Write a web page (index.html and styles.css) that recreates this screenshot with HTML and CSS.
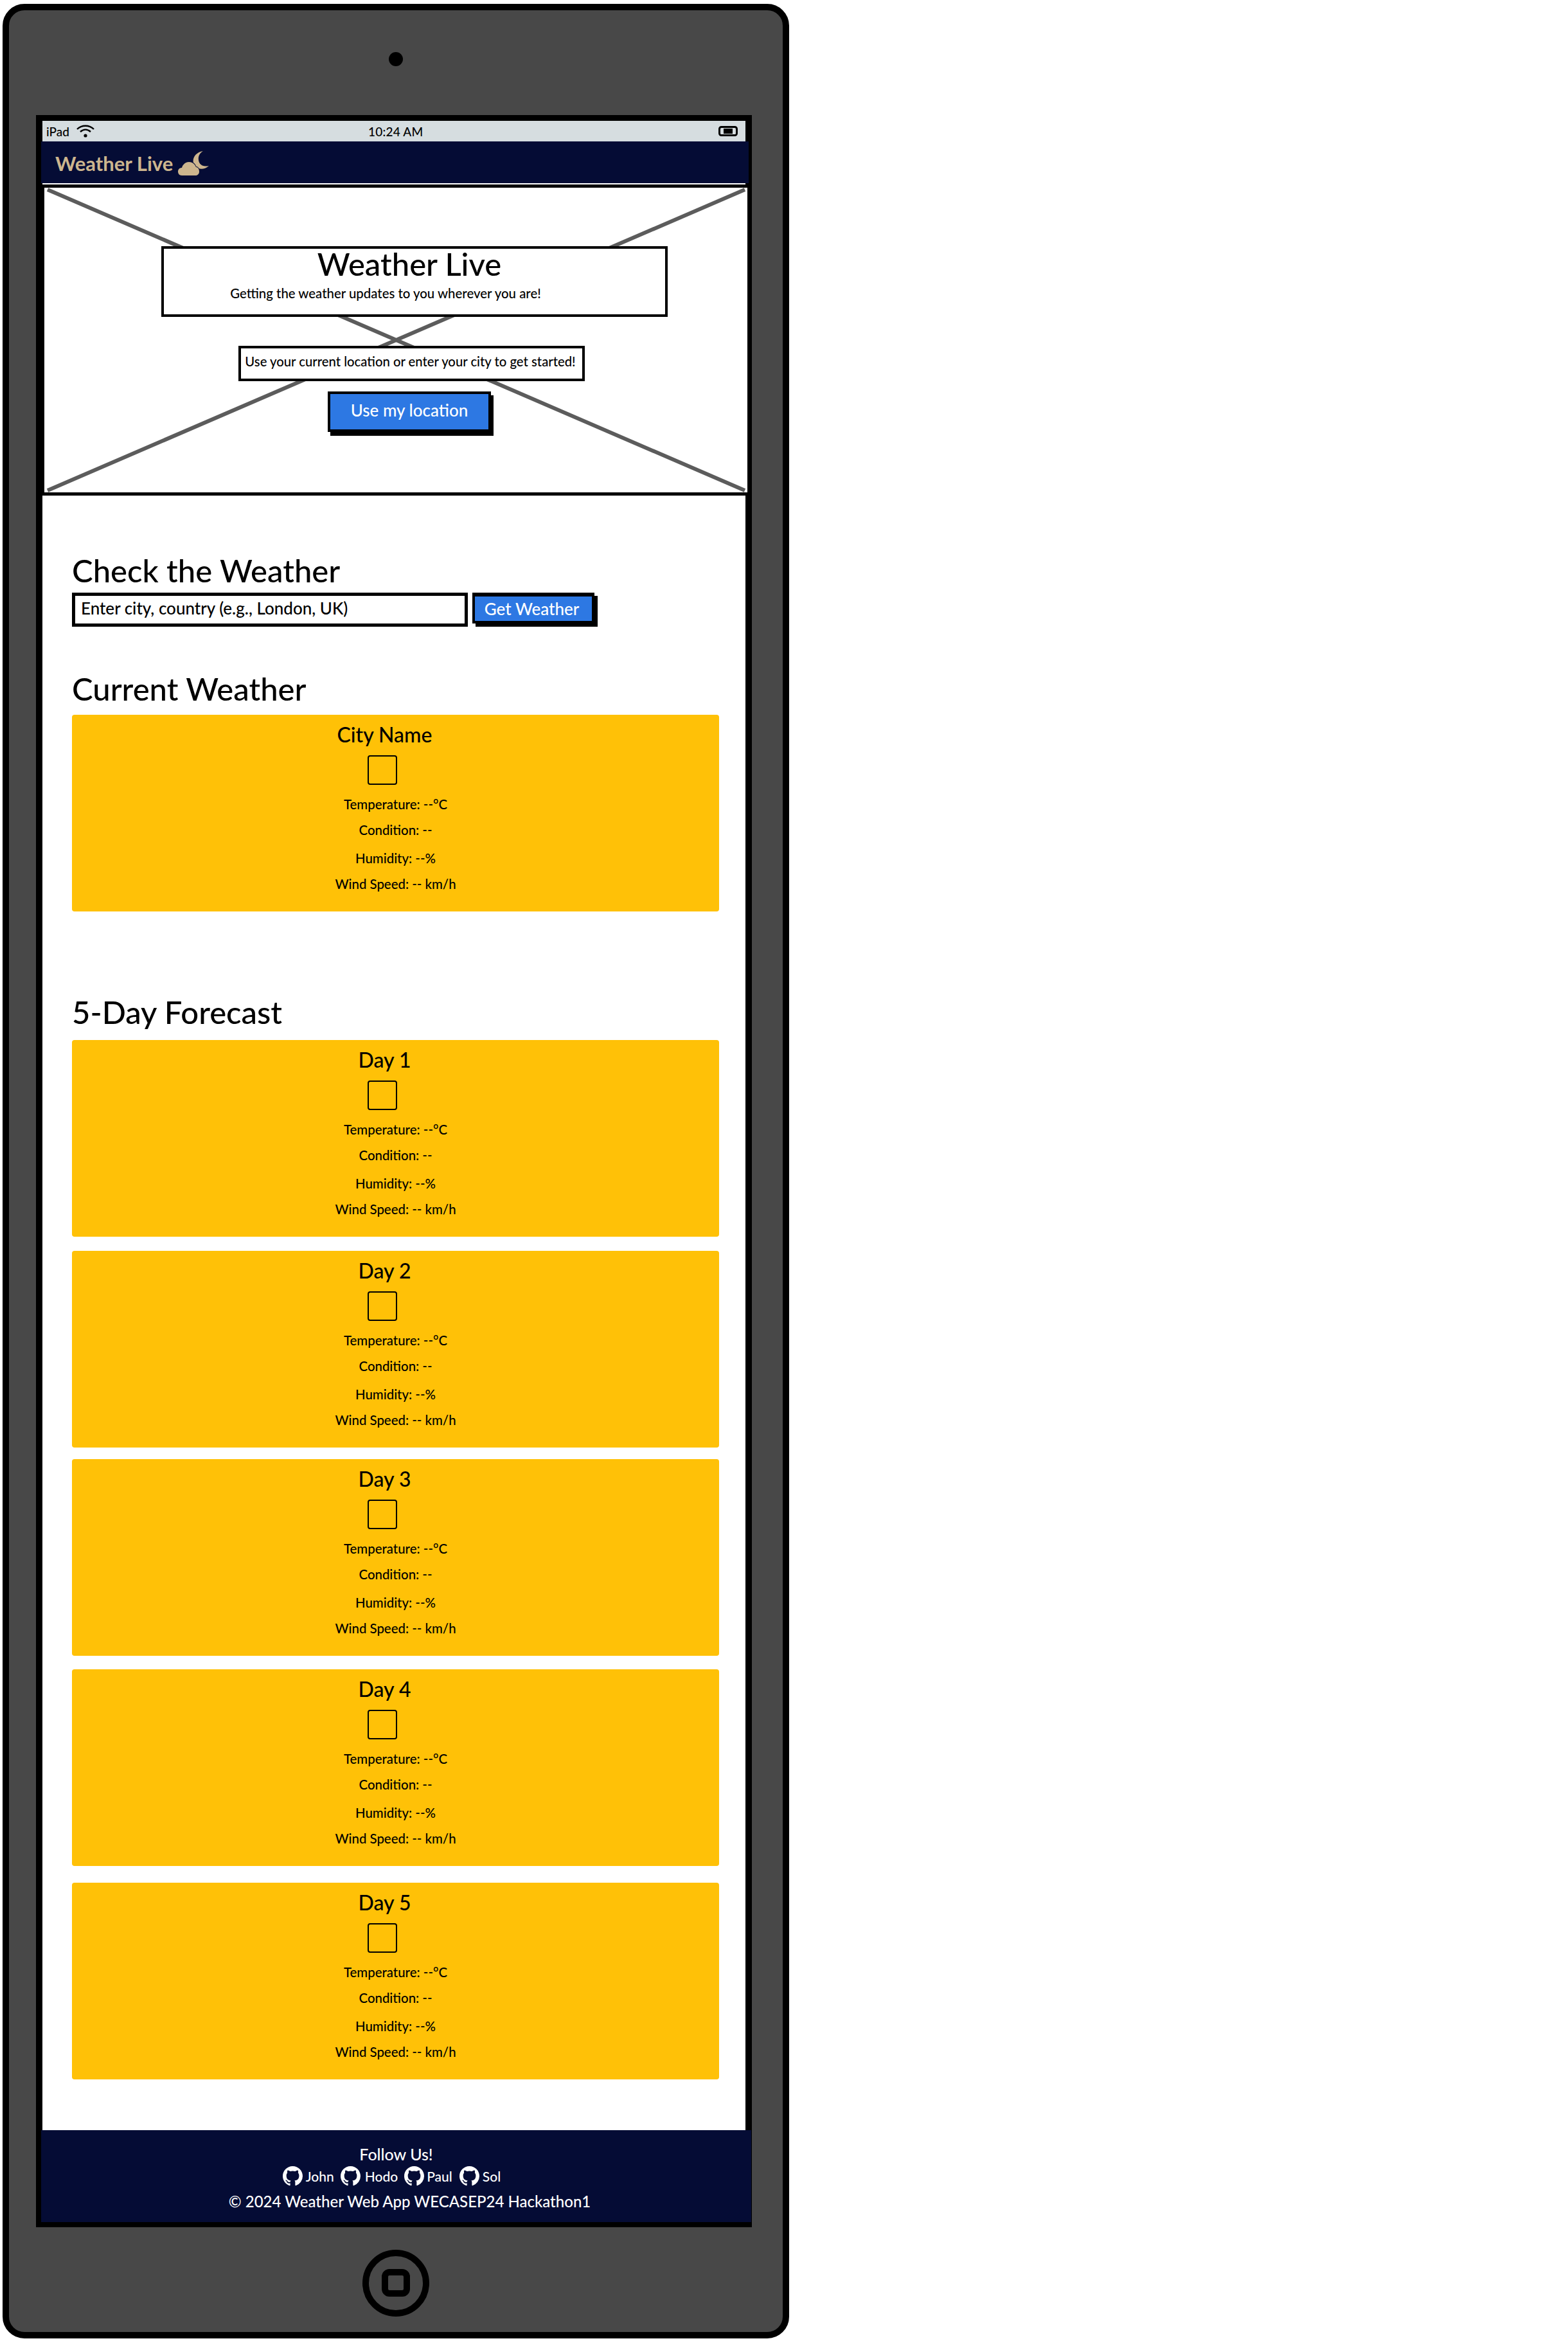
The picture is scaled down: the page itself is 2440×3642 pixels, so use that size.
FILE: index.html
```html
<!DOCTYPE html>
<html lang="en">
<head>
<meta charset="utf-8">
<title>Weather Live</title>
<link rel="stylesheet" href="styles.css">
</head>
<body>
<div class="device">
  <div class="camera"></div>
  <div class="screen">
    <div class="status">
      <div class="status-left">
        <span>iPad</span>
        <svg class="wifi" viewBox="0 0 28 20"><path d="M1 7C8 0 20 0 27 7M6 11C11 6.500 17 6.500 22 11" fill="none" stroke="#000" stroke-width="2.400"/><circle cx="14" cy="17" r="2.600"/></svg>
      </div>
      <span class="time">10:24 AM</span>
      <svg class="battery" viewBox="0 0 30 16"><rect x="1.500" y="1.500" width="27" height="13" rx="3" fill="none" stroke="#000" stroke-width="3"/><rect x="8" y="4" width="14" height="8"/></svg>
    </div>
    <nav class="nav">
      <span class="brand">Weather Live</span>
      <svg class="brand-icon" viewBox="0 0 48 38"><path d="M39 0C28 2 22 10 24 19C26 27 38 32 48 23C40 25 33 22 32 14C31 8 34 3 39 0Z" fill="#cdb68e"/><path d="M6 38C2 38 0 35 0 32C0 28 3 26 6 26C7 21 12 17 17 17C22 17 26 20 28 25C31 25 33 28 33 32C33 36 30 38 27 38Z" fill="#cdb68e" stroke="#050c35" stroke-width="2" paint-order="stroke"/></svg>
    </nav>
    <header class="hero">
      <svg class="hero-cross" viewBox="0 0 1094 474" preserveAspectRatio="none"><path d="M5 3L1090 471M1090 3L5 471" stroke="#5c5c5c" stroke-width="6" fill="none"/></svg>
      <div class="hero-title">
        <h1>Weather Live</h1>
        <p>Getting the weather updates to you wherever you are!</p>
      </div>
      <p class="hero-note">Use your current location or enter your city to get started!</p>
      <button class="btn hero-btn" type="button">Use my location</button>
    </header>
    <main class="main">
      <section class="search">
        <h2>Check the Weather</h2>
        <div class="search-row">
          <div class="input">Enter city, country (e.g., London, UK)</div>
          <button class="btn get-btn" type="button">Get Weather</button>
        </div>
      </section>
      <section class="current">
        <h2>Current Weather</h2>
        <article class="card">
          <h3>City Name</h3><div class="icon-box"></div>
          <p>Temperature: --°C</p><p>Condition: --</p><p>Humidity: --%</p><p>Wind Speed: -- km/h</p>
        </article>
      </section>
      <section class="forecast">
        <h2>5-Day Forecast</h2>
        <div class="cards">
          <article class="card"><h3>Day 1</h3><div class="icon-box"></div><p>Temperature: --°C</p><p>Condition: --</p><p>Humidity: --%</p><p>Wind Speed: -- km/h</p></article>
          <article class="card"><h3>Day 2</h3><div class="icon-box"></div><p>Temperature: --°C</p><p>Condition: --</p><p>Humidity: --%</p><p>Wind Speed: -- km/h</p></article>
          <article class="card"><h3>Day 3</h3><div class="icon-box"></div><p>Temperature: --°C</p><p>Condition: --</p><p>Humidity: --%</p><p>Wind Speed: -- km/h</p></article>
          <article class="card"><h3>Day 4</h3><div class="icon-box"></div><p>Temperature: --°C</p><p>Condition: --</p><p>Humidity: --%</p><p>Wind Speed: -- km/h</p></article>
          <article class="card"><h3>Day 5</h3><div class="icon-box"></div><p>Temperature: --°C</p><p>Condition: --</p><p>Humidity: --%</p><p>Wind Speed: -- km/h</p></article>
        </div>
      </section>
    </main>
    <footer class="footer">
      <div class="follow">Follow Us!</div>
      <div class="socials">
        <svg class="gh" viewBox="0 0 16 16"><use href="#gh-mark"/></svg><span class="s-john">John</span>
        <svg class="gh" viewBox="0 0 16 16"><use href="#gh-mark"/></svg><span class="s-hodo">Hodo</span>
        <svg class="gh" viewBox="0 0 16 16"><use href="#gh-mark"/></svg><span class="s-paul">Paul</span>
        <svg class="gh" viewBox="0 0 16 16"><use href="#gh-mark"/></svg><span class="s-sol">Sol</span>
      </div>
      <div class="copy">© 2024 Weather Web App WECASEP24 Hackathon1</div>
    </footer>
  </div>
  <svg class="home" viewBox="0 0 104 104"><circle cx="52" cy="52" r="47" fill="none" stroke="#000" stroke-width="10"/><rect x="35" y="35" width="34" height="33" rx="7" fill="none" stroke="#000" stroke-width="10"/></svg>
</div>
<svg class="defs" width="0" height="0"><defs><path id="gh-mark" fill="#fff" d="M8 0C3.580 0 0 3.580 0 8c0 3.540 2.290 6.530 5.470 7.590.4.070.55-.17.55-.38 0-.19-.01-.82-.01-1.490-2.010.37-2.530-.49-2.690-.94-.09-.23-.48-.94-.82-1.130-.28-.15-.68-.52-.01-.53.63-.01 1.080.58 1.230.82.72 1.210 1.870.87 2.330.66.07-.52.28-.87.51-1.070-1.780-.2-3.640-.89-3.640-3.950 0-.87.31-1.590.82-2.150-.08-.2-.36-1.020.08-2.120 0 0 .67-.21 2.200.82.64-.18 1.320-.27 2-.27.68 0 1.360.09 2 .27 1.530-1.040 2.200-.82 2.200-.82.44 1.100.16 1.920.08 2.120.51.56.82 1.270.82 2.150 0 3.070-1.870 3.750-3.650 3.950.29.25.54.73.54 1.480 0 1.070-.01 1.930-.01 2.200 0 .21.15.46.55.38A8.013 8.013 0 0016 8c0-4.420-3.580-8-8-8z"/></defs></svg>
</body>
</html>
```
FILE: styles.css
```css
* { box-sizing: border-box; }
html, body { margin: 0; padding: 0; background: #fff; }
body { font-family: Lato, "Open Sans", sans-serif; font-weight: 500; color: #000; height: 3642px; overflow: hidden; }
h1, h2, h3, p { margin: 0; font-weight: 500; }
.defs { position: absolute; }

.device {
  width: 1224px; height: 3632px; margin: 6px 0 0 4px;
  border: 10px solid #000; border-radius: 34px; background: #484848;
  display: flex; flex-direction: column; align-items: flex-start;
}
.camera { width: 22px; height: 22px; border-radius: 50%; background: #000; margin: 65px 0 0 591px; flex: none; }
.screen {
  width: 1114px; height: 3286px; margin: 76px 0 0 42px; flex: none;
  border: 10px solid #000; border-top-width: 9px; border-bottom-width: 8px;
  background: #fff; display: flex; flex-direction: column;
}

.status { height: 32px; background: #d6dde0; display: flex; align-items: center; padding: 0 12px 0 6px; position: relative; font-size: 19px; flex: none; }
.status-left { display: flex; align-items: center; gap: 11px; width: 501px; }
.wifi { width: 28px; height: 20px; }
.time { flex: 1; letter-spacing: .2px; }
.battery { width: 30px; height: 16px; }

.nav { height: 65px; margin: 0 -5px 0 -2px; background: #050c35; display: flex; align-items: center; padding: 2px 0 0 22px; flex: none; }
.brand { font-size: 31px; font-weight: 700; color: #cdb68e; }
.brand-icon { width: 48px; height: 38px; margin: 0 0 0 8px; }

.hero {
  height: 484px; margin: 2px -8px 0 -2px; border: 5px solid #000; background: #fff; position: relative; flex: none;
  display: flex; flex-direction: column; align-items: flex-start;
}
.hero-cross { position: absolute; inset: 0; width: 100%; height: 100%; }
.hero-title, .hero-note, .hero-btn { position: relative; }
.hero-title { width: 788px; height: 110px; margin: 91px 0 0 182px; border: 4px solid #000; background: #fff; text-align: center; }
.hero-title h1 { font-size: 49px; line-height: 56px; padding-right: 16px; margin-top: -5px; }
.hero-title p { font-size: 20.400px; line-height: 24px; padding-right: 90px; margin-top: 6px; }
.hero-note { width: 539px; height: 55px; margin: 45px 0 0 302px; border: 4px solid #000; background: #fff; text-align: center; font-size: 20.300px; line-height: 40px; padding-right: 4px; white-space: nowrap; }
.btn { font-family: inherit; font-weight: 500; color: #fff; background: #2d78e3; border: 4px solid #000; padding: 0; white-space: nowrap; }
.hero-btn { width: 254px; height: 63px; margin: 16px 0 0 441px; font-size: 26px; box-shadow: 4px 6px 0 #000; padding-bottom: 6px; }

.main { flex: 1; padding: 0 0 0 46px; }
.main h2 { font-size: 49px; line-height: 48px; }
.search { padding-top: 92px; }
.search-row { display: flex; gap: 7px; margin-top: 11px; }
.input { width: 616px; height: 53px; border: 5px solid #000; padding: 0 0 0 9px; font-size: 26px; line-height: 38px; white-space: nowrap; }
.get-btn { width: 190px; height: 48px; font-size: 26px; border-top-width: 6px; box-shadow: 5px 5px 0 #000; padding-right: 5px; }
.current { padding-top: 72px; }
.current .card { margin-top: 17px; }
.forecast { padding-top: 132px; }
.cards { display: flex; flex-direction: column; gap: 21px; margin-top: 20px; }
.cards .card:nth-child(2) { margin-top: 1px; }
.cards .card:nth-child(3) { margin-top: -3px; }
.cards .card:nth-child(5) { margin-top: 5px; }

.card { width: 1007px; height: 306px; border-radius: 4px; background: #ffc107; display: flex; flex-direction: column; align-items: center; padding-top: 12px; flex: none; }
.card h3 { font-size: 32px; line-height: 38px; margin-right: 34px; }
.icon-box { width: 46px; height: 46px; border: 2px solid #000; border-radius: 4px; margin: 13px 42px 0 0; flex: none; }
.card p { font-size: 20.400px; line-height: 24px; height: 40px; margin-top: 0; }
.icon-box + p { margin-top: 18px; }
.card p:nth-of-type(2) { height: 44px; }

.footer { height: 143px; margin: 0 -9px 0 -2px; background: #050c35; color: #fff; display: flex; flex-direction: column; align-items: center; padding-top: 22px; flex: none; }
.follow { font-size: 25px; line-height: 30px; }
.socials { display: flex; align-items: center; height: 31px; margin-top: 4px; font-size: 21px; margin-left: -14px; }
.gh { width: 31px; height: 31px; flex: none; }
.s-john { margin: 0 10px 0 5px; }
.s-hodo { margin: 0 10px 0 7px; }
.s-paul { margin: 0 11px 0 4px; }
.s-sol { margin: 0 0 0 5px; }
.copy { font-size: 24px; line-height: 30px; margin: 9px 0 0 42px; }

.home { width: 104px; height: 104px; margin: 35px 0 0 550px; flex: none; }
```
